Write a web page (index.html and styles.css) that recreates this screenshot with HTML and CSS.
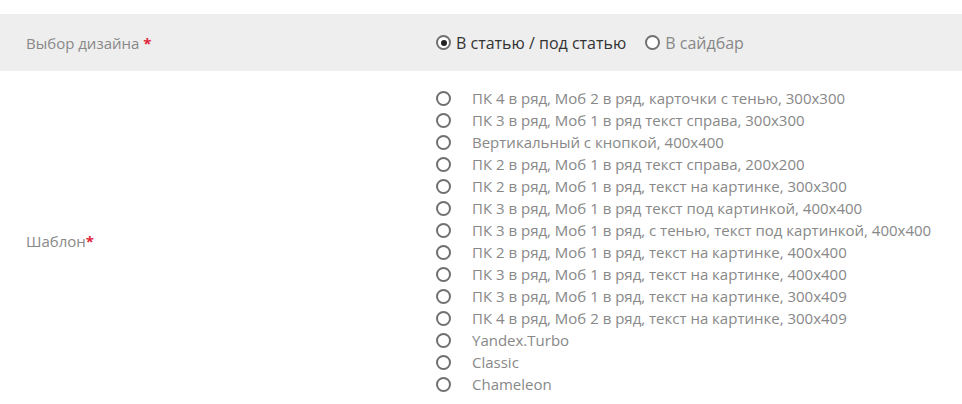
FILE: index.html
```html
<!DOCTYPE html>
<html lang="ru">
<head>
    <meta charset="UTF-8">
    <meta name="viewport" content="width=device-width, initial-scale=1.0">
    <title>Настройки</title>
    <link rel="stylesheet" href="styles.css">
</head>
<body>
    <div class="form">
        <div class="row row-grey">
            <div class="label">Выбор дизайна <span class="req">*</span></div>
            <div class="field inline">
                <label class="opt checked"><span class="radio"></span>В статью / под статью</label>
                <label class="opt"><span class="radio"></span>В сайдбар</label>
            </div>
        </div>
        <div class="row">
            <div class="label">Шаблон<span class="req">*</span></div>
            <ul class="field list">
                <li><span class="radio"></span>ПК 4 в ряд, Моб 2 в ряд, карточки с тенью, 300x300</li>
                <li><span class="radio"></span>ПК 3 в ряд, Моб 1 в ряд текст справа, 300x300</li>
                <li><span class="radio"></span>Вертикальный с кнопкой, 400x400</li>
                <li><span class="radio"></span>ПК 2 в ряд, Моб 1 в ряд текст справа, 200x200</li>
                <li><span class="radio"></span>ПК 2 в ряд, Моб 1 в ряд, текст на картинке, 300x300</li>
                <li><span class="radio"></span>ПК 3 в ряд, Моб 1 в ряд текст под картинкой, 400x400</li>
                <li><span class="radio"></span>ПК 3 в ряд, Моб 1 в ряд, с тенью, текст под картинкой, 400x400</li>
                <li><span class="radio"></span>ПК 2 в ряд, Моб 1 в ряд, текст на картинке, 400x400</li>
                <li><span class="radio"></span>ПК 3 в ряд, Моб 1 в ряд, текст на картинке, 400x400</li>
                <li><span class="radio"></span>ПК 3 в ряд, Моб 1 в ряд, текст на картинке, 300x409</li>
                <li><span class="radio"></span>ПК 4 в ряд, Моб 2 в ряд, текст на картинке, 300x409</li>
                <li><span class="radio"></span>Yandex.Turbo</li>
                <li><span class="radio"></span>Classic</li>
                <li><span class="radio"></span>Chameleon</li>
            </ul>
        </div>
    </div>
</body>
</html>
```

FILE: styles.css
```css
*{
    padding: 0;
    margin: 0;
    list-style: none;
    box-sizing: border-box;
}
body{
    background: #fff;
    font-family: "Open Sans", "Liberation Sans", sans-serif;
    font-size: 15px;
    color: #888;
}
.form{
    padding-top: 14px;
}
.row{
    display: grid;
    grid-template-columns: 436px 1fr;
    align-items: center;
}
.row-grey{
    background: #eee;
    height: 57px;
}
.row + .row{
    padding: 16px 0;
}
.label{
    padding-left: 26px;
    line-height: 22px;
}
.req{
    color: #e0263a;
    font-weight: bold;
}
.inline{
    display: flex;
    gap: 19px;
    font-size: 16px;
}
.opt{
    display: flex;
    align-items: center;
    gap: 5px;
}
.opt.checked{
    color: #333;
}
.radio{
    width: 15px;
    height: 15px;
    border: 2px solid #707070;
    border-radius: 50%;
    background: #fff;
    position: relative;
    flex: none;
}
.checked .radio::after{
    content: "";
    position: absolute;
    left: 2.5px;
    top: 2.5px;
    width: 6px;
    height: 6px;
    border-radius: 50%;
    background: #222;
}
.list li{
    display: flex;
    align-items: center;
    gap: 21px;
    height: 22px;
}
```
